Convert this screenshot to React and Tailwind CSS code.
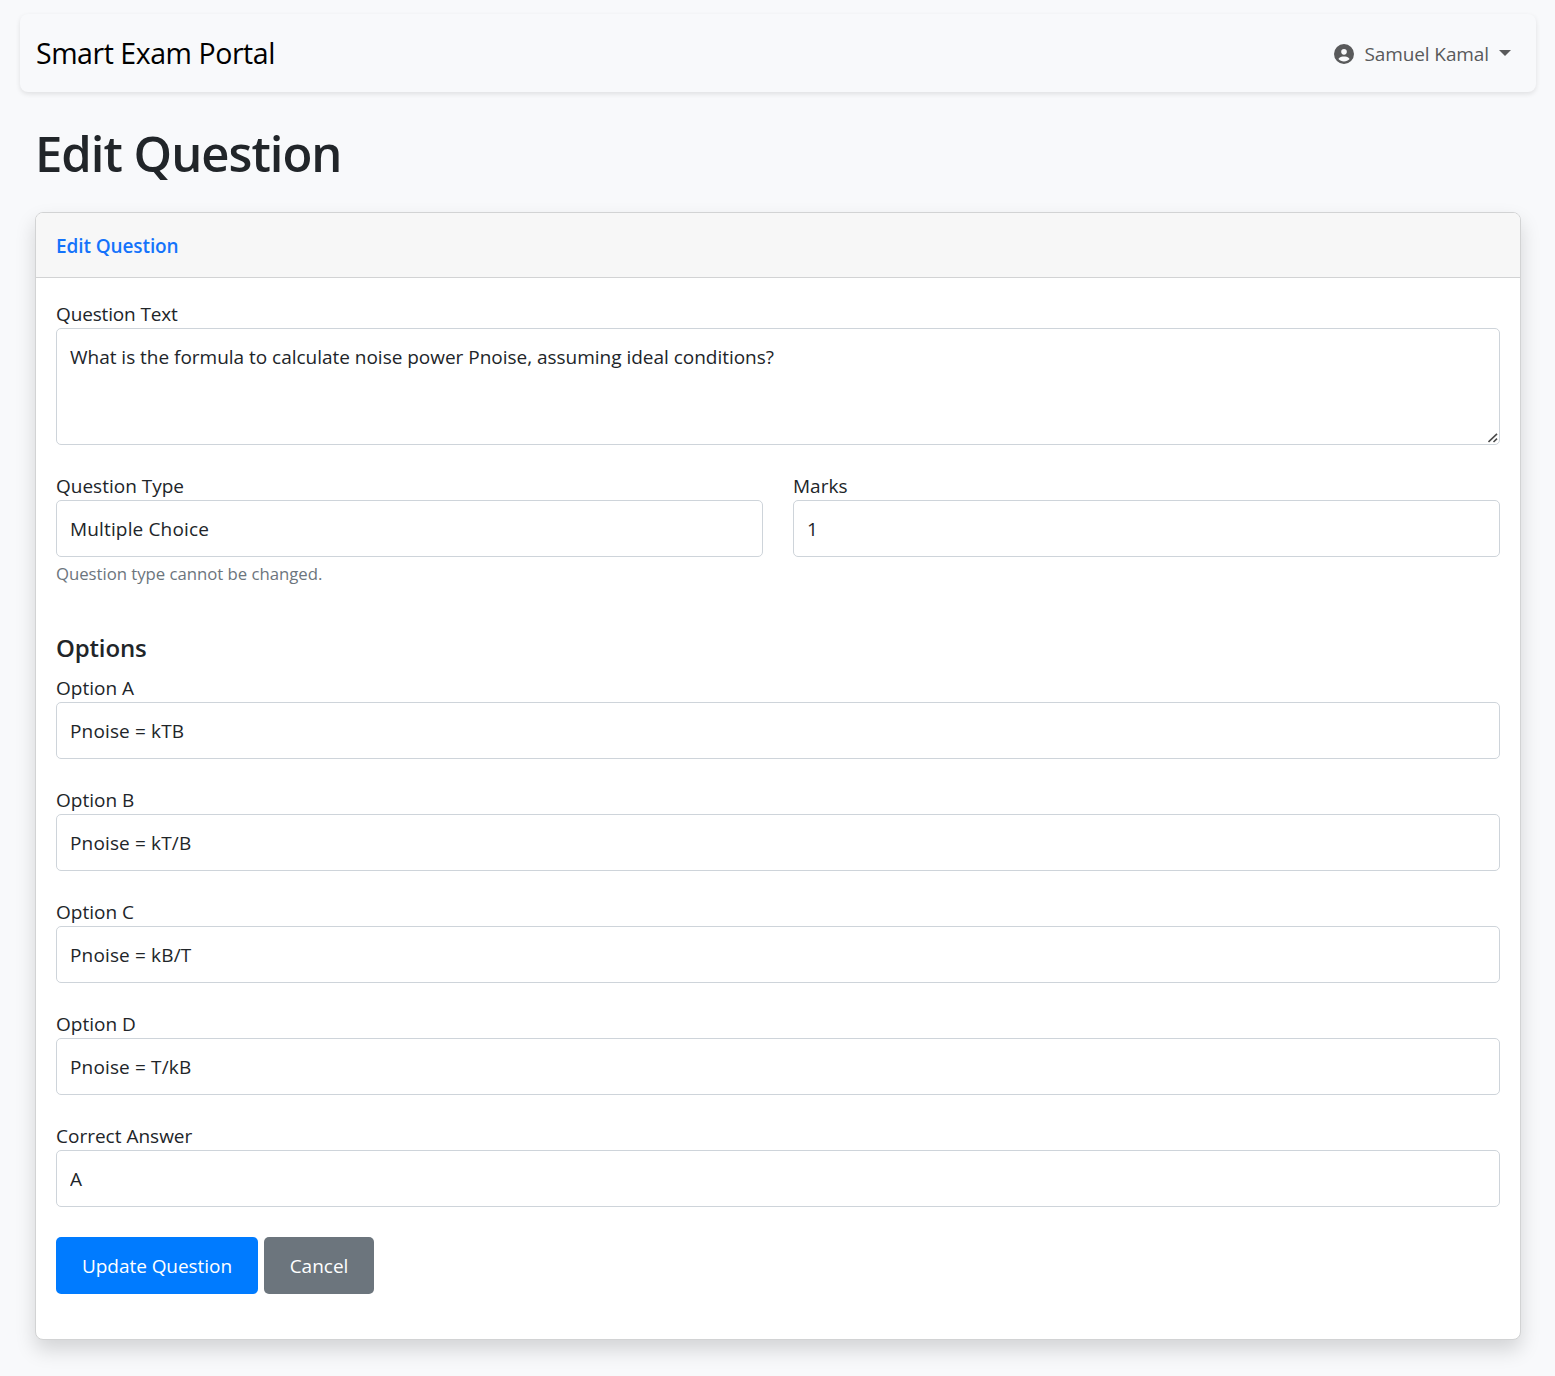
import { FaCircleUser } from "react-icons/fa6";

const options = [
  { label: "Option A", value: "Pnoise = kTB" },
  { label: "Option B", value: "Pnoise = kT/B" },
  { label: "Option C", value: "Pnoise = kB/T" },
  { label: "Option D", value: "Pnoise = T/kB" },
];

const control =
  "block w-full rounded-[5px] border border-[#ced4da] bg-white px-[13px] text-[19px] text-[#212529] outline-none";

function Field({ label, value, hint }) {
  return (
    <div>
      <label className="block h-7 leading-7">{label}</label>
      <input
        type="text"
        readOnly
        defaultValue={value}
        className={`${control} h-[57px] tracking-[0.15px]`}
      />
      {hint && (
        <small className="mt-1 block h-[26px] text-[16.75px] leading-[26px] tracking-[-0.03px] text-[#6c757d]">
          {hint}
        </small>
      )}
    </div>
  );
}

function Navbar() {
  return (
    <nav className="flex h-[78px] items-center justify-between rounded-[8px] bg-[#f8f9fb] pl-4 pr-[25px] shadow-[0_2px_5px_rgba(0,0,0,0.1)]">
      <span className="-mt-px text-[28.5px] leading-10 tracking-[-0.45px] text-black">Smart Exam Portal</span>
      <button className="flex items-center pt-px text-[#595a5b]">
        <FaCircleUser className="size-5" />
        <span className="ml-[10px] pt-px leading-7 tracking-[-0.1px]">Samuel Kamal</span>
        <svg className="ml-[10px] h-[6px] w-3 -translate-y-px" viewBox="0 0 12 6" fill="currentColor">
          <path d="M0 0H12L6 6Z" />
        </svg>
      </button>
    </nav>
  );
}

export default function App() {
  return (
    <div className="min-h-[1376px] bg-[#f8f9fb] pt-[14px] pr-[19px] pl-[20px] font-['Open_Sans',sans-serif] text-[19px] text-[#212529]">
      <Navbar />
      <main className="px-[15px]">
        <h1 className="mt-[31px] h-[60px] text-[49px] font-semibold leading-[60px] tracking-[-1px]">
          Edit Question
        </h1>
        <section className="mt-[29px] h-[1128px] rounded-[8px] border border-[#d2d3d4] bg-white shadow-[0_10px_20px_rgba(0,0,0,0.15)]">
          <header className="flex h-[65px] items-center rounded-t-[7px] border-b border-[#d2d3d4] bg-[#f7f7f7] px-5">
            <h6 className="mt-px font-semibold leading-7 tracking-[-0.1px] text-[#1473fb]">Edit Question</h6>
          </header>
          <form className="px-5 pt-[22px]">
            <label className="block h-7 leading-7 tracking-[-0.15px]">Question Text</label>
            <div className="relative">
              <textarea
                readOnly
                defaultValue="What is the formula to calculate noise power Pnoise, assuming ideal conditions?"
                className={`${control} h-[117px] resize-none py-[14px] leading-7 tracking-[-0.02px]`}
              />
              <svg
                className="absolute right-[2px] bottom-[2px] size-[10px]"
                viewBox="0 0 10 10"
                fill="none"
                stroke="#4b4b4b"
                strokeWidth="1.6"
              >
                <path d="M0.5 9L9 0.8M5.5 9L9 5.7" />
              </svg>
            </div>
            <div className="mt-[27px] grid grid-cols-2 gap-[30px]">
              <Field label="Question Type" value="Multiple Choice" hint="Question type cannot be changed." />
              <Field label="Marks" value="1" />
            </div>
            <h5 className="mt-[44px] h-[34px] text-[24px] font-semibold leading-[33px] tracking-[-0.15px]">Options</h5>
            <div className="mt-[9px] flex flex-col gap-[27px]">
              {options.map((o) => (
                <Field key={o.label} label={o.label} value={o.value} />
              ))}
              <Field label="Correct Answer" value="A" />
            </div>
            <div className="mt-[30px] flex gap-[6px] text-white">
              <button type="button" className="h-[57px] w-[202px] rounded-[5px] bg-[#007bff] pt-px tracking-[-0.05px]">
                Update Question
              </button>
              <button type="button" className="h-[57px] w-[110px] rounded-[5px] bg-[#6c757d] pt-px">
                Cancel
              </button>
            </div>
          </form>
        </section>
      </main>
    </div>
  );
}
